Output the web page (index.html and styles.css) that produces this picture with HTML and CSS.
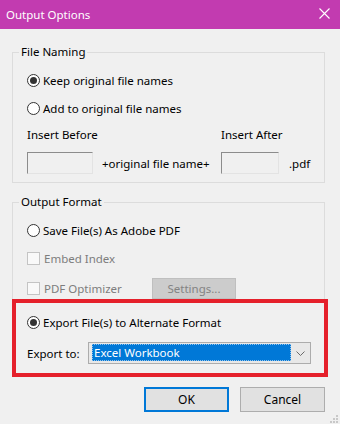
FILE: index.html
```html
<!DOCTYPE html>
<html lang="en">
<head>
    <meta charset="UTF-8">
    <meta name="viewport" content="width=device-width, initial-scale=1.0">
    <title>Output Options</title>
    <link rel="stylesheet" href="styles.css">
</head>
<body>
    <div class="window">
        <div class="titlebar">
            <span class="title">Output Options</span>
            <svg class="close" width="11" height="11" viewBox="0 0 11 11">
                <path d="M0.5 0.5 L10.5 10.5 M10.5 0.5 L0.5 10.5" stroke="#fff" stroke-width="1.1" fill="none"/>
            </svg>
        </div>

        <div class="dialog">
            <fieldset class="group group-naming">
                <legend>File Naming</legend>
                <label class="option first"><span class="radio checked"></span>Keep original file names</label>
                <label class="option"><span class="radio"></span>Add to original file names</label>

                <div class="insert-grid">
                    <span class="insert-label">Insert Before</span>
                    <span class="insert-label after">Insert After</span>
                    <span class="textbox"></span>
                    <span class="joiner">+original file name+</span>
                    <span class="textbox short"></span>
                    <span class="ext">.pdf</span>
                </div>
            </fieldset>

            <fieldset class="group group-format">
                <legend>Output Format</legend>
                <label class="option first"><span class="radio"></span>Save File(s) As Adobe PDF</label>
                <label class="option disabled"><span class="check"></span>Embed Index</label>
                <div class="optimizer-row">
                    <label class="option disabled"><span class="check"></span>PDF Optimizer</label>
                    <span class="btn btn-disabled">Settings...</span>
                </div>

                <div class="highlight">
                    <label class="option"><span class="radio checked"></span>Export File(s) to Alternate Format</label>
                    <div class="export-row">
                        <span class="export-label">Export to:</span>
                        <div class="combo">
                            <span class="combo-value">Excel Workbook</span>
                            <span class="combo-arrow">
                                <svg width="9" height="5" viewBox="0 0 9 5">
                                    <polyline points="0.5,0.5 4.5,4.5 8.5,0.5" stroke="#6a6a6a" fill="none"/>
                                </svg>
                            </span>
                        </div>
                    </div>
                </div>
            </fieldset>

            <div class="actions">
                <button class="btn btn-default">OK</button>
                <button class="btn">Cancel</button>
            </div>
        </div>

        <svg class="grip" width="8" height="8" viewBox="0 0 8 8">
            <rect x="6" y="0" width="2" height="2" fill="#c8c8c8"/>
            <rect x="3" y="3" width="2" height="2" fill="#c8c8c8"/>
            <rect x="6" y="3" width="2" height="2" fill="#c8c8c8"/>
            <rect x="0" y="6" width="2" height="2" fill="#c8c8c8"/>
            <rect x="3" y="6" width="2" height="2" fill="#c8c8c8"/>
            <rect x="6" y="6" width="2" height="2" fill="#c8c8c8"/>
        </svg>
    </div>
</body>
</html>
```

FILE: styles.css
```css
body {
    margin: 0;
    background-color: #f0f0f0;
    font-family: "Segoe UI", "Noto Sans", sans-serif;
    font-size: 11.5px;
    color: #000;
}

.window {
    position: relative;
    width: 340px;
    height: 424px;
    overflow: hidden;
}

.titlebar {
    display: flex;
    align-items: center;
    justify-content: space-between;
    height: 29px;
    padding: 0 10px 0 6px;
    box-sizing: border-box;
    background-color: #c23bb0;
    color: #fff;
}

.title {
    line-height: 16px;
}

.close {
    margin-top: -3px;
}

.dialog {
    padding-top: 15px;
}

.group {
    margin: 0 15px 0 12px;
    padding: 0 0 8px 14px;
    border: 1px solid #dcdcdc;
    min-width: 0;
}

.group legend {
    margin-left: -8px;
    padding: 0 2px;
    line-height: 16px;
}

.group-format {
    margin-top: 11px;
    padding-bottom: 0;
}

.option {
    display: flex;
    align-items: center;
    height: 16px;
    margin-top: 12px;
}

.option.first {
    margin-top: 12px;
}

.option.disabled {
    color: #7d7d7d;
}

.radio {
    width: 13px;
    height: 13px;
    box-sizing: border-box;
    border: 1px solid #333;
    border-radius: 50%;
    background: #fff;
    margin-right: 3px;
    display: flex;
    align-items: center;
    justify-content: center;
}

.radio.checked::after {
    content: "";
    width: 7px;
    height: 7px;
    border-radius: 50%;
    background: #333;
}

.check {
    width: 13px;
    height: 13px;
    box-sizing: border-box;
    border: 1px solid #c4c4c4;
    background: #f9f9f9;
    margin-right: 4px;
}

.insert-grid {
    display: grid;
    grid-template-columns: 66px 128px 58px auto;
    grid-template-rows: 16px 22px;
    row-gap: 9px;
    margin-top: 11px;
    align-items: center;
}

.insert-label {
    grid-column: span 2;
    line-height: 16px;
}

.textbox {
    height: 22px;
    box-sizing: border-box;
    border: 1px solid #e3e3e3;
    border-top-color: #8c8c8c;
    border-left-color: #8c8c8c;
    background: #f0f0f0;
}

.joiner {
    padding-left: 9px;
}

.ext {
    padding-left: 10px;
}

.optimizer-row {
    display: flex;
    align-items: center;
    height: 21px;
    margin-top: 12px;
}

.optimizer-row .option {
    margin-top: 0;
    width: 125px;
}

.btn {
    display: flex;
    align-items: center;
    justify-content: center;
    box-sizing: border-box;
    font-family: inherit;
    font-size: 11.5px;
    background: #e1e1e1;
    border: 1px solid #adadad;
    color: #000;
    padding: 0;
}

.btn-disabled {
    width: 84px;
    height: 21px;
    background: #cccccc;
    border-color: #bfbfbf;
    color: #838383;
}

.highlight {
    width: 316px;
    box-sizing: border-box;
    margin: 0 0 -1px -15px;
    padding: 11px 0 9px 11px;
    border: 4px solid #e5202b;
    position: relative;
}

.highlight .option {
    margin-top: 0;
}

.export-row {
    display: flex;
    align-items: center;
    margin-top: 12px;
}

.export-label {
    width: 61px;
}

.combo {
    display: flex;
    width: 223px;
    height: 22px;
    box-sizing: border-box;
    border: 1px solid #acacac;
    background: #e8e8e8;
}

.combo-value {
    flex: 1;
    margin: 1px 0 2px 3px;
    padding-left: 1px;
    border: 1px dotted #8fc0ea;
    background: #0078d7;
    color: #fff;
    line-height: 15px;
}

.combo-arrow {
    width: 19px;
    display: flex;
    align-items: center;
    justify-content: center;
}

.actions {
    display: flex;
    justify-content: flex-end;
    gap: 11px;
    padding-right: 15px;
    margin-top: 10px;
}

.actions .btn {
    width: 85px;
    height: 25px;
    font-size: 12px;
}

.btn-default {
    border-color: #0078d7;
    box-shadow: inset 0 0 0 1px #0078d7;
}

.grip {
    position: absolute;
    right: 2px;
    bottom: 1px;
}
```
